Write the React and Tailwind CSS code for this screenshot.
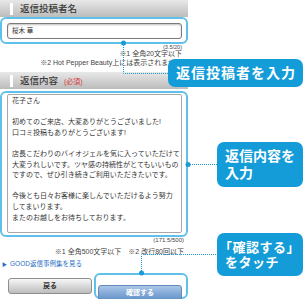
const body = [
  '花子さん',
  '',
  '初めてのご来店、大変ありがとうございました!',
  '口コミ投稿もありがとうございます!',
  '',
  '店長こだわりのバイオジェルを気に入っていただけて',
  '大変うれしいです。ツヤ感の持続性がとてもいいもの',
  'ですので、ぜひ引き続きご利用いただきたいです。',
  '',
  '今後とも日々お客様に楽しんでいただけるよう努力',
  'してまいります。',
  'またのお越しをお待ちしております。',
];

function SectionHead({ children }) {
  return (
    <div className="h-[17px] flex items-center bg-gradient-to-b from-[#e8e8e8] to-[#bcbcbc]">
      <span className="ml-[10px] w-[3px] h-[12px] bg-white" />
      <div className="ml-[7px] flex items-baseline text-[9.5px] font-medium leading-none text-[#3a3a3a]">{children}</div>
    </div>
  );
}

export default function App() {
  return (
    <div className="relative w-[305px] h-[299px] overflow-hidden bg-white font-['Liberation_Sans','Noto_Sans_CJK_JP',sans-serif]">
      {/* form column */}
      <div className="w-[188px]">
        <SectionHead>返信投稿者名</SectionHead>

        <div className="h-[27px] flex items-center pl-[5px] pr-[4px] border-2 border-[#5fc0ea] rounded-[6px]">
          <div className="w-full h-[16px] flex items-center pl-[4px] border border-[#7a7a7a] rounded-[3px] shadow-[inset_0_1px_2px_rgba(0,0,0,0.25)] text-[6.5px] text-[#333]">
            桜木 華
          </div>
        </div>

        <div className="pr-[6px] text-right text-[#444]">
          <p className="text-[5.5px] leading-[6px]">(3.5/20)</p>
          <p className="text-[7px] leading-[8px]">※1 全角20文字以下</p>
          <p className="mt-[1px] text-[7px] leading-[8px]">※2 Hot Pepper Beauty上には表示されません</p>
        </div>

        <div className="mt-[5px]">
          <SectionHead>
            返信内容
            <span className="ml-[6px] text-[7px] font-normal text-[#d83a3a]">(必須)</span>
          </SectionHead>
        </div>

        <div className="mt-[2px] h-[146px] pt-[1px] pl-[5px] pr-[4px] border-2 border-[#5fc0ea] rounded-[6px]">
          <div className="h-[139px] pl-[4px] pt-[1px] border border-[#a8a8a8] rounded-[2px] text-[7px] leading-[10.6px] text-[#333]">
            {body.map((line, i) => (
              <p key={i} className="whitespace-pre h-[10.6px]">{line}</p>
            ))}
          </div>
        </div>

        <div className="pr-[4px] text-right text-[#444]">
          <p className="text-[6px] leading-[7px]">(171.5/500)</p>
          <p className="mt-[4px] text-[7px] leading-[8px]">※1 全角500文字以下　※2 改行80回以下</p>
        </div>

        <p className="mt-[4px] pl-[2px] flex items-center gap-[3px] text-[6.5px] leading-[8px] text-[#2a70c4]">
          <span className="text-[5px]">▶</span>GOOD返信事例集を見る
        </p>

        <div className="mt-[5px] flex items-start pl-[8px]">
          <button className="mt-[5px] w-[84px] h-[16px] border border-[#8e8e8e] rounded-[3px] bg-gradient-to-b from-[#f7f7f7] to-[#bdbdbd] text-[7px] font-bold text-[#333]">
            戻る
          </button>
          <div className="ml-[2px] w-[94px] h-[26px] pl-[2px] pt-[3px] border-2 border-[#5fc0ea] rounded-[6px]">
            <button className="w-[84px] h-[16px] border border-[#6489bb] rounded-[3px] bg-gradient-to-b from-[#a9c6e8] to-[#6390c8] text-[7px] font-bold text-white">
              確認する
            </button>
          </div>
        </div>
      </div>

      {/* connectors */}
      <svg className="absolute inset-0 pointer-events-none" width="305" height="299">
        <g stroke="#1a9ad6" strokeWidth="1" strokeDasharray="1 1" fill="none">
          <path d="M123.5 43 V73.5 H168" />
          <path d="M188 164.5 H217" />
          <path d="M141.5 273 V254.5 H217" />
        </g>
        <g fill="#1a9ad6">
          <circle cx="123.5" cy="43" r="2.5" />
          <circle cx="188" cy="164.5" r="2.5" />
          <circle cx="141.5" cy="273" r="2.5" />
        </g>
      </svg>

      {/* callouts */}
      <div className="absolute left-[168px] top-[59px] w-[135px] h-[28px] flex items-center pl-[8px] rounded-[7px] bg-[#149cd8] text-white text-[14px] font-bold tracking-[1px] leading-none">
        返信投稿者を入力
      </div>
      <div className="absolute left-[217px] top-[142px] w-[86px] h-[45px] flex flex-col justify-center pl-[8px] rounded-[7px] bg-[#149cd8] text-white text-[14px] font-bold leading-[17px]">
        <span>返信内容を</span>
        <span>入力</span>
      </div>
      <div className="absolute left-[217px] top-[233px] w-[86px] h-[43px] flex flex-col justify-center pl-[2px] rounded-[7px] bg-[#149cd8] text-white text-[13px] font-bold leading-[15px] tracking-[0.5px]">
        <span>「確認する」</span>
        <span className="pl-[6px]">をタッチ</span>
      </div>
    </div>
  );
}
